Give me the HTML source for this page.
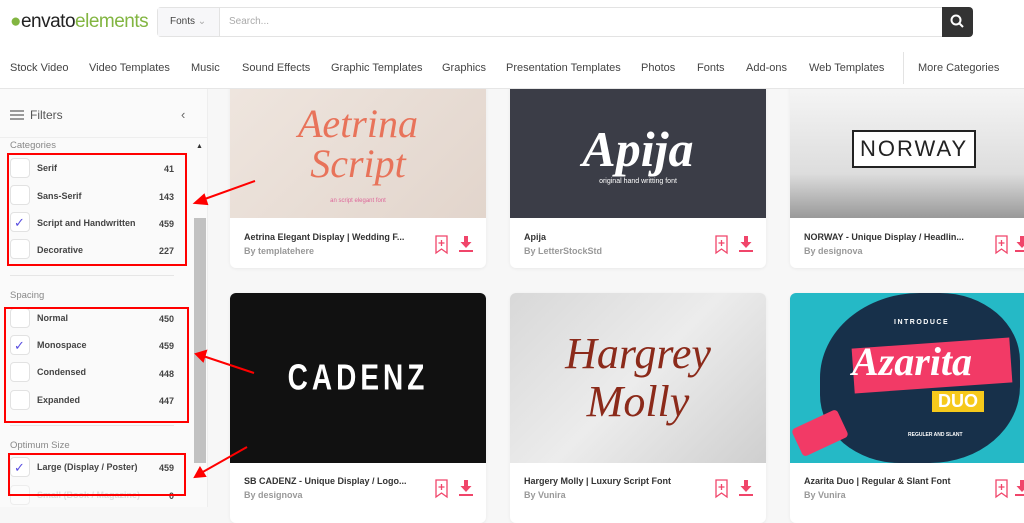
<!DOCTYPE html>
<html><head><meta charset="utf-8"><style>
*{box-sizing:border-box;margin:0;padding:0}
body{width:1024px;height:507px;overflow:hidden;background:#f7f7f7;font-family:"Liberation Sans",sans-serif;position:relative;color:#333}
.abs{position:absolute}
.hdr{left:0;top:0;width:1024px;height:89px;background:#fff;border-bottom:1px solid #e6e6e6;z-index:2}
.nav{top:62px;font-size:11px;color:#444;white-space:nowrap;z-index:3}
.side{left:0;top:89px;width:208px;height:418px;background:#fafafa;border-right:1px solid #eee}
.lbl{font-size:9.5px;color:#888;left:10px}
.cb{left:10px;width:20px;height:20px;border:1px solid #e2e2e2;border-radius:4px;background:#fff}
.it{left:37px;font-size:9px;color:#444;font-weight:bold}
.ct{font-size:9px;color:#444;font-weight:bold;text-align:right}
.chk{position:absolute;left:3px;top:2px;color:#5a4fe0;font-size:13px}
.card{background:#fff;border-radius:6px;overflow:hidden;box-shadow:0 1px 3px rgba(0,0,0,.06)}
.img{position:absolute;left:0;top:0;width:100%;overflow:hidden;display:flex;align-items:center;justify-content:center}
.t{position:absolute;left:14px;font-size:9px;font-weight:bold;color:#333;white-space:nowrap}
.by{position:absolute;left:14px;font-size:9px;color:#999;font-weight:bold}
.red{border:2px solid #f00}
.z{z-index:3}
</style></head><body>
<div class="abs hdr"></div>
<div class="abs z" style="left:10px;top:11px;font-size:19px;letter-spacing:-0.5px"><span style="color:#82b541">●</span><span style="color:#222">envato</span><span style="color:#82b541">elements</span></div>
<div class="abs z" style="left:157px;top:7px;width:786px;height:30px;border:1px solid #e3e3e3;border-radius:4px 0 0 4px;background:#fff"></div>
<div class="abs z" style="left:158px;top:8px;width:62px;height:28px;background:#f7f7f9;border-right:1px solid #e3e3e3;font-size:10px;color:#444;padding:8px 0 0 12px">Fonts <span style="color:#aaa">⌄</span></div>
<div class="abs z" style="left:229px;top:16px;font-size:10px;color:#aaa">Search...</div>
<div class="abs z" style="left:942px;top:7px;width:31px;height:30px;background:#333;border-radius:0 4px 4px 0"><svg width="31" height="30"><circle cx="14" cy="13" r="4.5" stroke="#fff" stroke-width="2" fill="none"/><line x1="17" y1="16" x2="21" y2="20" stroke="#fff" stroke-width="2"/></svg></div>
<div class="abs nav" style="left:10px">Stock Video</div>
<div class="abs nav" style="left:89px">Video Templates</div>
<div class="abs nav" style="left:191px">Music</div>
<div class="abs nav" style="left:242px">Sound Effects</div>
<div class="abs nav" style="left:331px">Graphic Templates</div>
<div class="abs nav" style="left:442px">Graphics</div>
<div class="abs nav" style="left:506px">Presentation Templates</div>
<div class="abs nav" style="left:641px">Photos</div>
<div class="abs nav" style="left:697px">Fonts</div>
<div class="abs nav" style="left:746px">Add-ons</div>
<div class="abs nav" style="left:809px">Web Templates</div>
<div class="abs z" style="left:903px;top:52px;width:1px;height:32px;background:#e3e3e3"></div>
<div class="abs nav" style="left:918px">More Categories</div>

<div class="abs side"></div>
<div class="abs" style="left:0;top:137px;width:208px;height:1px;background:#eee"></div>
<svg class="abs" style="left:10px;top:109px" width="14" height="12"><g stroke="#666" stroke-width="1.3"><line x1="0" y1="2" x2="14" y2="2"/><line x1="0" y1="6" x2="14" y2="6"/><line x1="0" y1="10" x2="14" y2="10"/></g></svg>
<div class="abs" style="left:30px;top:108px;font-size:12px;color:#555">Filters</div>
<div class="abs" style="left:181px;top:107px;font-size:13px;color:#666">‹</div>
<div class="abs lbl" style="top:140px">Categories</div>
<div class="abs" style="left:196px;top:143px;font-size:7px;color:#333">▲</div>
<div class="abs" style="left:194px;top:218px;width:12px;height:245px;background:#c1c1c1"></div>
<div class="abs cb" style="top:158px"></div><div class="abs it" style="top:163px">Serif</div><div class="abs ct" style="top:164px;left:150px;width:24px">41</div>
<div class="abs cb" style="top:185px"></div><div class="abs it" style="top:191px">Sans-Serif</div><div class="abs ct" style="top:192px;left:150px;width:24px">143</div>
<div class="abs cb" style="top:212px"><span class="chk">✓</span></div><div class="abs it" style="top:218px">Script and Handwritten</div><div class="abs ct" style="top:219px;left:150px;width:24px">459</div>
<div class="abs cb" style="top:239px"></div><div class="abs it" style="top:245px">Decorative</div><div class="abs ct" style="top:246px;left:150px;width:24px">227</div>
<div class="abs" style="left:10px;top:275px;width:164px;height:1px;background:#e6e6e6"></div>
<div class="abs lbl" style="top:290px">Spacing</div>
<div class="abs cb" style="top:308px"></div><div class="abs it" style="top:313px">Normal</div><div class="abs ct" style="top:314px;left:150px;width:24px">450</div>
<div class="abs cb" style="top:335px"><span class="chk">✓</span></div><div class="abs it" style="top:340px">Monospace</div><div class="abs ct" style="top:341px;left:150px;width:24px">459</div>
<div class="abs cb" style="top:362px"></div><div class="abs it" style="top:367px">Condensed</div><div class="abs ct" style="top:369px;left:150px;width:24px">448</div>
<div class="abs cb" style="top:390px"></div><div class="abs it" style="top:395px">Expanded</div><div class="abs ct" style="top:396px;left:150px;width:24px">447</div>
<div class="abs" style="left:10px;top:425px;width:164px;height:1px;background:#e6e6e6"></div>
<div class="abs lbl" style="top:440px">Optimum Size</div>
<div class="abs cb" style="top:457px"><span class="chk">✓</span></div><div class="abs it" style="top:462px">Large (Display / Poster)</div><div class="abs ct" style="top:463px;left:150px;width:24px">459</div>
<div class="abs cb" style="top:485px;opacity:.5"></div><div class="abs it" style="top:490px;color:#ddd">Small (Book / Magazine)</div><div class="abs ct" style="top:491px;left:150px;width:24px">0</div>

<div class="abs red" style="left:7px;top:153px;width:180px;height:113px"></div>
<div class="abs red" style="left:4px;top:307px;width:185px;height:116px"></div>
<div class="abs red" style="left:8px;top:453px;width:178px;height:43px"></div>

<!-- row 1 -->
<div class="abs card" style="left:230px;top:70px;width:256px;height:198px">
<div class="img" style="height:148px;background:linear-gradient(135deg,#efe6df,#e2d5cc);flex-direction:column;padding-top:20px"><div style="font-family:'Liberation Serif',serif;font-style:italic;color:#e8735a;font-size:40px;line-height:40px;text-align:center">Aetrina<br>Script</div><div style="font-size:6px;color:#d69;margin-top:14px">an script elegant font</div></div>
<div class="t" style="top:162px">Aetrina Elegant Display | Wedding F...</div><div class="by" style="top:176px">By templatehere</div></div>
<div class="abs card" style="left:510px;top:70px;width:256px;height:198px">
<div class="img" style="height:148px;background:#3b3d47;flex-direction:column;padding-top:16px"><div style="font-family:'Liberation Serif',serif;font-weight:bold;font-style:italic;color:#fff;font-size:50px">Apija</div><div style="font-size:7px;color:#fff">original hand writting font</div></div>
<div class="t" style="top:162px">Apija</div><div class="by" style="top:176px">By LetterStockStd</div></div>
<div class="abs card" style="left:790px;top:70px;width:250px;height:198px">
<div class="img" style="height:148px;background:linear-gradient(#fafafa,#ddd 70%,#999);padding-top:10px;justify-content:flex-start;padding-left:62px"><div style="border:2px solid #222;padding:4px 6px;font-size:22px;color:#222;letter-spacing:2px;background:#fff">NORWAY</div></div>
<div class="t" style="top:162px">NORWAY - Unique Display / Headlin...</div><div class="by" style="top:176px">By designova</div></div>
<!-- row 2 -->
<div class="abs card" style="left:230px;top:293px;width:256px;height:230px">
<div class="img" style="height:170px;background:#111"><div style="color:#fff;font-size:28px;font-weight:bold;letter-spacing:4px;transform:scaleY(1.3)">CADENZ</div></div>
<div class="t" style="top:183px">SB CADENZ - Unique Display / Logo...</div><div class="by" style="top:197px">By designova</div></div>
<div class="abs card" style="left:510px;top:293px;width:256px;height:230px">
<div class="img" style="height:170px;background:linear-gradient(135deg,#d8d8d8,#ececec 50%,#cfcfcf)"><div style="font-family:'Liberation Serif',serif;font-style:italic;color:#8b2a1a;font-size:44px;line-height:48px;text-align:center">Hargrey<br>Molly</div></div>
<div class="t" style="top:183px">Hargery Molly | Luxury Script Font</div><div class="by" style="top:197px">By Vunira</div></div>
<div class="abs card" style="left:790px;top:293px;width:250px;height:230px">
<div class="img" style="height:170px;background:#25b9c6"><div style="position:absolute;left:30px;top:0;width:200px;height:170px;background:#17304a;border-radius:50% 40% 45% 40%"></div><div style="position:absolute;left:104px;top:26px;color:#fff;font-size:7px;font-weight:bold;letter-spacing:1.5px">INTRODUCE</div><div style="position:absolute;left:63px;top:50px;width:158px;height:45px;background:#f23a66;transform:rotate(-4deg)"></div><div style="position:absolute;left:62px;top:45px;color:#fff;font-family:'Liberation Serif',serif;font-style:italic;font-weight:bold;font-size:40px">Azarita</div><div style="position:absolute;left:142px;top:98px;background:#f6c91b;color:#fff;font-size:18px;font-weight:bold;padding:0 6px">DUO</div><div style="position:absolute;left:118px;top:139px;color:#fff;font-size:5px;font-weight:bold">REGULER AND SLANT</div><div style="position:absolute;left:5px;top:125px;width:50px;height:30px;background:#f23a66;transform:rotate(-25deg);border-radius:4px"></div></div>
<div class="t" style="top:183px">Azarita Duo | Regular &amp; Slant Font</div><div class="by" style="top:197px">By Vunira</div></div>

<svg class="abs" style="left:0;top:0;z-index:4" width="300" height="507"><g stroke="#f00" stroke-width="2" fill="#f00">
<line x1="255" y1="181" x2="202" y2="200"/><polygon points="195,203 204,195 207,204"/>
<line x1="254" y1="373" x2="203" y2="356"/><polygon points="196,354 206,351 203,361"/>
<line x1="247" y1="447" x2="201" y2="473"/><polygon points="195,477 200,468 205,476"/></g></svg>

<svg class="abs" style="left:0;top:0;pointer-events:none" width="1024" height="507"><g fill="none" stroke="#f0456a" stroke-width="1.3">
<path d="M436 236h11v17l-5.5-4-5.5 4z M441.5 240v6 M438.5 243h6"/>
<path d="M716 236h11v17l-5.5-4-5.5 4z M721.5 240v6 M718.5 243h6"/>
<path d="M996 236h11v17l-5.5-4-5.5 4z M1001.5 240v6 M998.5 243h6"/>
<path d="M436 480h11v17l-5.5-4-5.5 4z M441.5 484v6 M438.5 487h6"/>
<path d="M716 480h11v17l-5.5-4-5.5 4z M721.5 484v6 M718.5 487h6"/>
<path d="M996 480h11v17l-5.5-4-5.5 4z M1001.5 484v6 M998.5 487h6"/></g>
<g fill="#f0456a">
<path d="M464 236h4v6h3.5l-5.5 6-5.5-6h3.5z"/><rect x="459" y="250" width="14" height="2"/>
<path d="M744 236h4v6h3.5l-5.5 6-5.5-6h3.5z"/><rect x="739" y="250" width="14" height="2"/>
<path d="M1020 236h4v6h3.5l-5.5 6-5.5-6h3.5z"/><rect x="1015" y="250" width="14" height="2"/>
<path d="M464 480h4v6h3.5l-5.5 6-5.5-6h3.5z"/><rect x="459" y="494" width="14" height="2"/>
<path d="M744 480h4v6h3.5l-5.5 6-5.5-6h3.5z"/><rect x="739" y="494" width="14" height="2"/>
<path d="M1020 480h4v6h3.5l-5.5 6-5.5-6h3.5z"/><rect x="1015" y="494" width="14" height="2"/></g></svg>
</body></html>
